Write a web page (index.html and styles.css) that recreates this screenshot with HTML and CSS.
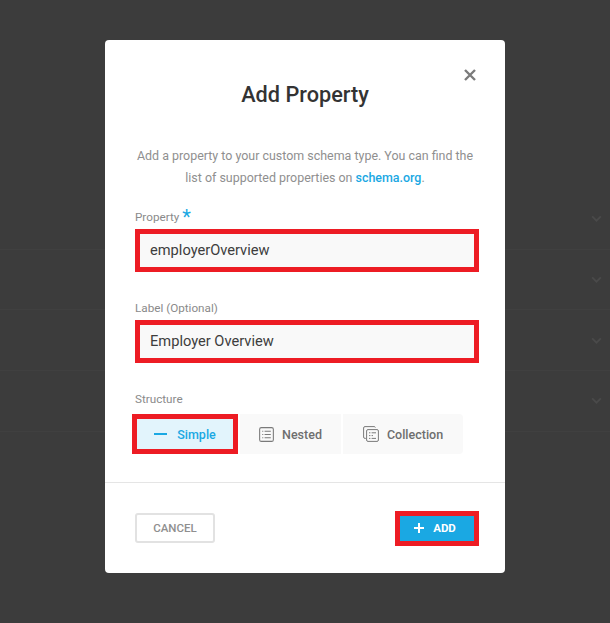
FILE: index.html
```html
<!DOCTYPE html>
<html lang="en">
<head>
<meta charset="utf-8">
<title>Add Property</title>
<link rel="stylesheet" href="styles.css">
</head>
<body>
<div class="backdrop">
  <div class="bg-row"><svg class="chev" viewBox="0 0 12 8"><path d="M1 1.5l5 5 5-5"/></svg></div>
  <div class="bg-row"><svg class="chev" viewBox="0 0 12 8"><path d="M1 1.5l5 5 5-5"/></svg></div>
  <div class="bg-row"><svg class="chev" viewBox="0 0 12 8"><path d="M1 1.5l5 5 5-5"/></svg></div>
  <div class="bg-row"><svg class="chev" viewBox="0 0 12 8"><path d="M1 1.5l5 5 5-5"/></svg></div>
</div>
<main class="modal">
  <svg class="close" viewBox="0 0 12 12"><path d="M1 1l10 10M11 1L1 11"/></svg>
  <div class="modal-body">
    <h1 class="title">Add Property</h1>
    <p class="intro">Add a property to your custom schema type. You can find the list of supported properties on <a class="link" href="#">schema.org</a>.</p>
    <div class="label label-first">Property <span class="star">*</span></div>
    <div class="input">employerOverview</div>
    <div class="label label-second">Label (Optional)</div>
    <div class="input">Employer Overview</div>
    <div class="label label-third">Structure</div>
    <div class="segments">
      <div class="seg seg-simple"><span class="dash"></span>Simple</div>
      <div class="seg seg-nested">
        <svg class="seg-icon" viewBox="0 0 14 14"><rect x="0.6" y="0.6" width="12.8" height="12.8" rx="1.6"/><path d="M3 4h1M5.2 4H11M3 7h1M5.2 7H11M3 10h1M5.2 10H11"/></svg>Nested
      </div>
      <div class="seg seg-collection">
        <svg class="seg-icon seg-icon-large" viewBox="0 0 16 16"><path d="M2.8 12.4H2a1.4 1.4 0 0 1-1.4-1.4V2A1.4 1.4 0 0 1 2 .6h9a1.4 1.4 0 0 1 1.4.9"/><rect x="3.6" y="3.6" width="11.8" height="11.8" rx="1.4"/><path d="M6 6.8h1.4M8.6 6.8H13M6 9.6h1.4M8.6 9.6H10M6 12.4h1.4M8.6 12.4H13"/></svg>Collection
      </div>
    </div>
  </div>
  <div class="footer">
    <div class="btn-cancel">CANCEL</div>
    <div class="btn-add"><span class="plus"></span>ADD</div>
  </div>
</main>
</body>
</html>
```
FILE: styles.css
```css
* { box-sizing: border-box; }
html, body { margin: 0; height: 100%; }
body {
  width: 610px;
  height: 623px;
  overflow: hidden;
  position: relative;
  background: #3c3c3c;
  font-family: Roboto, "Liberation Sans", sans-serif;
}
.backdrop {
  padding-top: 189px;
  display: flex;
  flex-direction: column;
}
.bg-row {
  height: 60.7px;
  display: flex;
  align-items: center;
  justify-content: flex-end;
  padding-right: 8px;
  border-bottom: 1px solid #404040;
}
.chev { width: 11px; height: 7px; fill: none; stroke: #4a4a4a; stroke-width: 2; }
.modal {
  position: absolute;
  left: 105px;
  top: 40px;
  width: 400px;
  height: 533px;
  background: #fff;
  border-radius: 4px;
}
.close {
  position: absolute;
  right: 29px;
  top: 29px;
  width: 12px;
  height: 12px;
  fill: none;
  stroke: #7b7b7b;
  stroke-width: 2.4;
}
.modal-body { padding: 40px 26px 0 30px; height: 443px; border-bottom: 1px solid #e5e5e5; }
.title {
  margin: 0;
  padding-right: 4px;
  text-align: center;
  font-size: 21.7px;
  line-height: 30px;
  font-weight: 500;
  color: #333;
}
.intro {
  margin: 35px 0 0;
  padding-right: 4px;
  text-align: center;
  font-size: 12.45px;
  line-height: 22px;
  color: #8f8f8f;
}
.link { color: #1aa8e3; font-weight: 500; text-decoration: none; }
.label { font-size: 11.7px; line-height: 16px; color: #8a8a8a; height: 16px; }
.label-first { margin-top: 20px; margin-bottom: 4px; }
.label-second { margin-top: 28px; margin-bottom: 4px; }
.label-third { margin-top: 28px; margin-bottom: 7px; }
.star { color: #1aa8e3; font-size: 20px; line-height: 16px; vertical-align: -3px; }
.input {
  width: 344px;
  height: 43px;
  border: 5px solid #ed1c24;
  background: #f9f9f9;
  padding: 0 0 2px 10px;
  display: flex;
  align-items: center;
  font-size: 14.65px;
  color: #3d3d3d;
}
.segments { display: flex; margin-left: -3px; gap: 2px; height: 40px; }
.seg {
  display: flex;
  align-items: center;
  justify-content: center;
  height: 40px;
  background: #f9f9f9;
  font-size: 12.5px;
  font-weight: 500;
  color: #6e6e6e;
}
.seg-simple {
  width: 106px;
  background: #e2f4fc;
  border: 5px solid #ed1c24;
  color: #1aa8e3;
}
.seg-nested { width: 101px; }
.seg-collection { width: 120px; border-radius: 0 4px 4px 0; }
.dash { width: 13px; height: 2px; background: #1aa8e3; margin-right: 10px; }
.seg-icon {
  width: 15px;
  height: 15px;
  margin-right: 8px;
  fill: none;
  stroke: #7a7a7a;
  stroke-width: 1;
}
.seg-icon-large { width: 16px; height: 16px; margin-right: 8px; }
.footer {
  display: flex;
  justify-content: space-between;
  align-items: center;
  padding: 0 26px 0 30px;
  height: 90px;
}
.footer > * { display: flex; align-items: center; justify-content: center; font-size: 11.5px; font-weight: 500; }
.btn-cancel {
  width: 80px;
  height: 30px;
  border: 2px solid #e2e2e2;
  border-radius: 3px;
  color: #8f8f8f;
}
.btn-add {
  width: 84px;
  height: 35px;
  border: 5px solid #ed1c24;
  background: #1aa8e3;
  color: #fff;
  font-weight: 700;
  padding-right: 4px;
}
.plus {
  position: relative;
  width: 10px;
  height: 2.4px;
  background: #fff;
  margin-right: 9px;
}
.plus::after {
  content: "";
  position: absolute;
  left: 3.8px;
  top: -3.8px;
  width: 2.4px;
  height: 10px;
  background: #fff;
}
```
